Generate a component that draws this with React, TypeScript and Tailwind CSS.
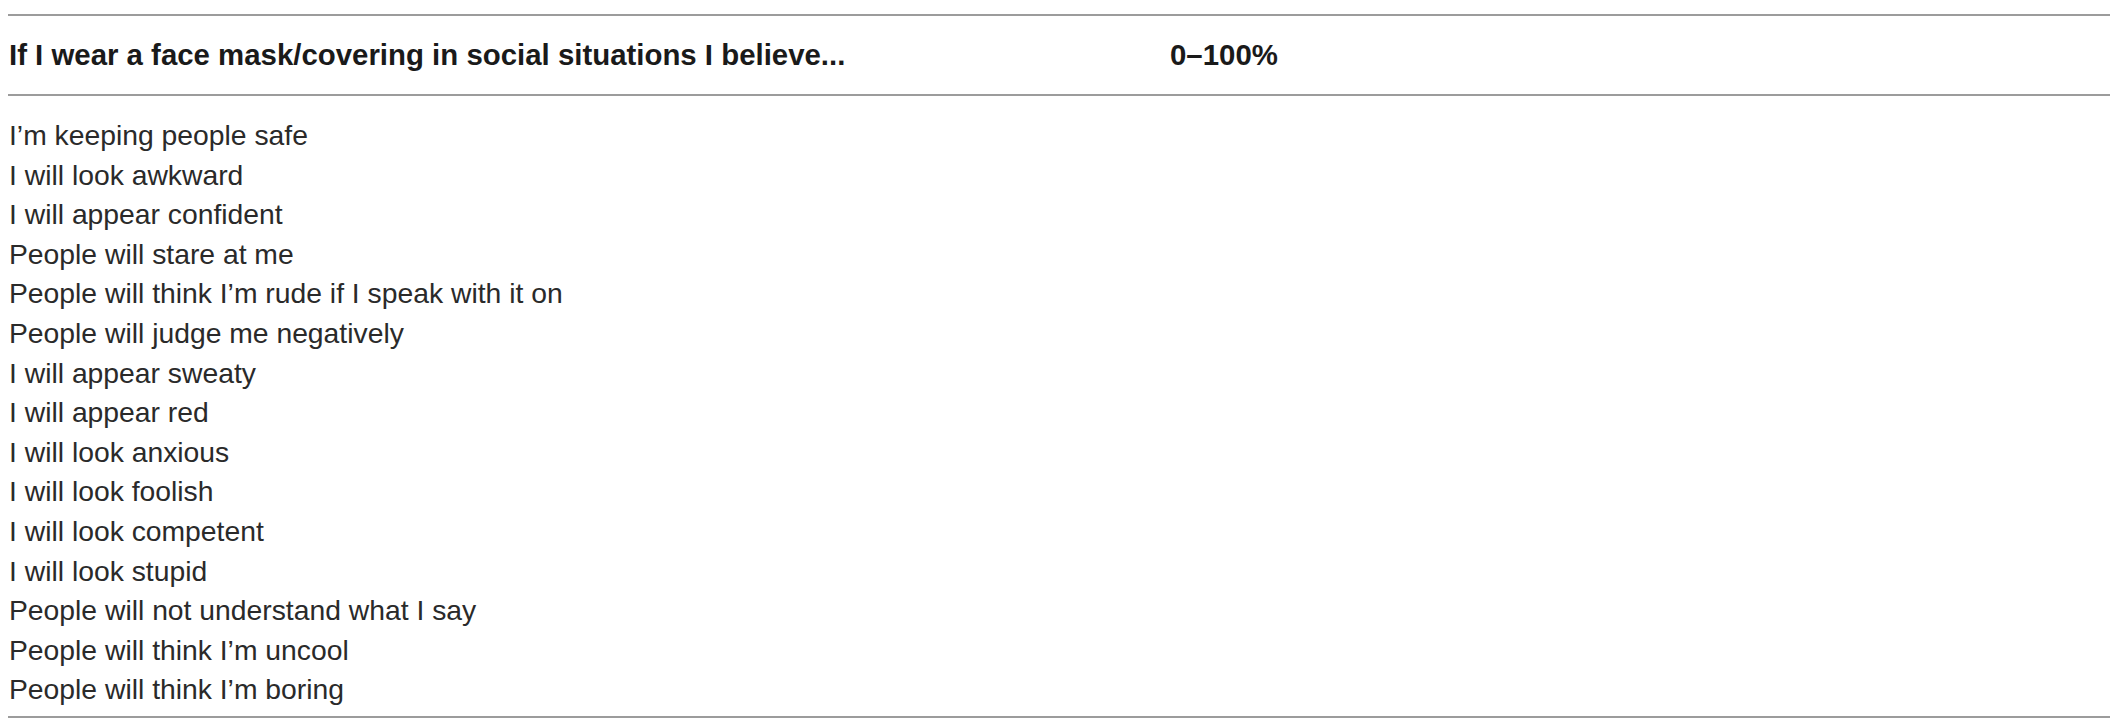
const rows = [
  "I’m keeping people safe",
  "I will look awkward",
  "I will appear confident",
  "People will stare at me",
  "People will think I’m rude if I speak with it on",
  "People will judge me negatively",
  "I will appear sweaty",
  "I will appear red",
  "I will look anxious",
  "I will look foolish",
  "I will look competent",
  "I will look stupid",
  "People will not understand what I say",
  "People will think I’m uncool",
  "People will think I’m boring",
];

const App = () => {
  return (
    <div className="w-[2119px] h-[727px] bg-white pt-[14px] pl-[8px] pr-[9px] font-['Liberation_Sans',Arial,sans-serif] text-[#1c1c1c]">
      <div className="h-[2px] bg-[#9c9c9c]" />
      <div className="flex items-center h-[78px] pl-[1px] text-[29.4px] font-bold text-[#1a1a1a]">
        <div className="w-[1161px]">
          If I wear a face mask/covering in social situations I believe...
        </div>
        <div>0–100%</div>
      </div>
      <div className="h-[2px] bg-[#9c9c9c]" />
      <div className="pt-[20px] pb-[6px] pl-[1px] text-[28.3px] leading-[39.6px] text-[#2a2a2a]">
        {rows.map((row) => (
          <div key={row}>{row}</div>
        ))}
      </div>
      <div className="h-[2px] bg-[#9c9c9c]" />
    </div>
  );
};

export default App;
